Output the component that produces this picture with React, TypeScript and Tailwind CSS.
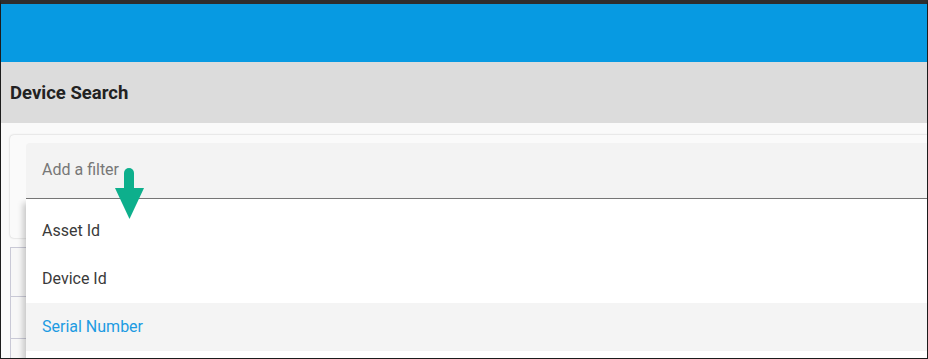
export default function App() {
  const items = ['Asset Id', 'Device Id', 'Serial Number']

  return (
    <div className="w-[928px] h-[359px] flex flex-col overflow-hidden border border-[#1c1c1c] border-t-4 border-t-[#2e2e2e] bg-[#fafafa] font-['Roboto',sans-serif]">
      {/* app bar */}
      <div className="h-[58px] shrink-0 bg-[#079ae2]" />

      {/* page title */}
      <div className="h-[61px] shrink-0 bg-[#dcdcdc] flex items-center px-[9px] pt-[2px]">
        <h1 className="text-[18.5px] font-bold text-[#222]">Device Search</h1>
      </div>

      {/* content */}
      <div className="relative flex-1 overflow-hidden pt-3 pl-[9px]">
        <div className="h-[103px] -mr-[24px] rounded-[4px] bg-[#fafafa] shadow-[0_0_2px_rgba(0,0,0,0.25)] pt-2 px-4">
          <div className="h-[56px] rounded-t-[4px] bg-[#f3f3f3] border-b border-[#777] flex items-center px-4 pb-[2px]">
            <span className="text-[16px] text-[#777]">Add a filter</span>
          </div>
        </div>

        {/* results table behind the menu */}
        <div className="mt-[9px] border-l border-t border-[#c9c9d6] bg-[#f7f7f7]">
          <div className="h-[49px] border-b border-[#c9c9d6]" />
          <div className="h-[42px] border-b border-[#c9c9d6]" />
          <div className="h-[20px]" />
        </div>

        {/* filter menu */}
        <div className="absolute left-[25px] right-0 top-[76px] bottom-0 bg-white shadow-[-3px_4px_6px_rgba(0,0,0,0.2)] pt-[8px]">
          {items.map((item, i) => (
            <div
              key={item}
              className={`h-[48px] flex items-center px-4 text-[16px] ${
                i === 2 ? 'bg-[#f4f4f4] text-[#1d9be2]' : 'text-[#3a3a3a]'
              }`}
            >
              {item}
            </div>
          ))}
        </div>

        {/* annotation arrow */}
        <svg className="absolute left-[113px] top-[45px]" width="31" height="52" viewBox="0 0 31 52">
          <path d="M10 5a5 5 0 0 1 10 0v18h-10z" fill="#0daf8c" />
          <polygon points="1,20 30,20 15.5,51" fill="#0daf8c" />
        </svg>
      </div>
    </div>
  )
}
